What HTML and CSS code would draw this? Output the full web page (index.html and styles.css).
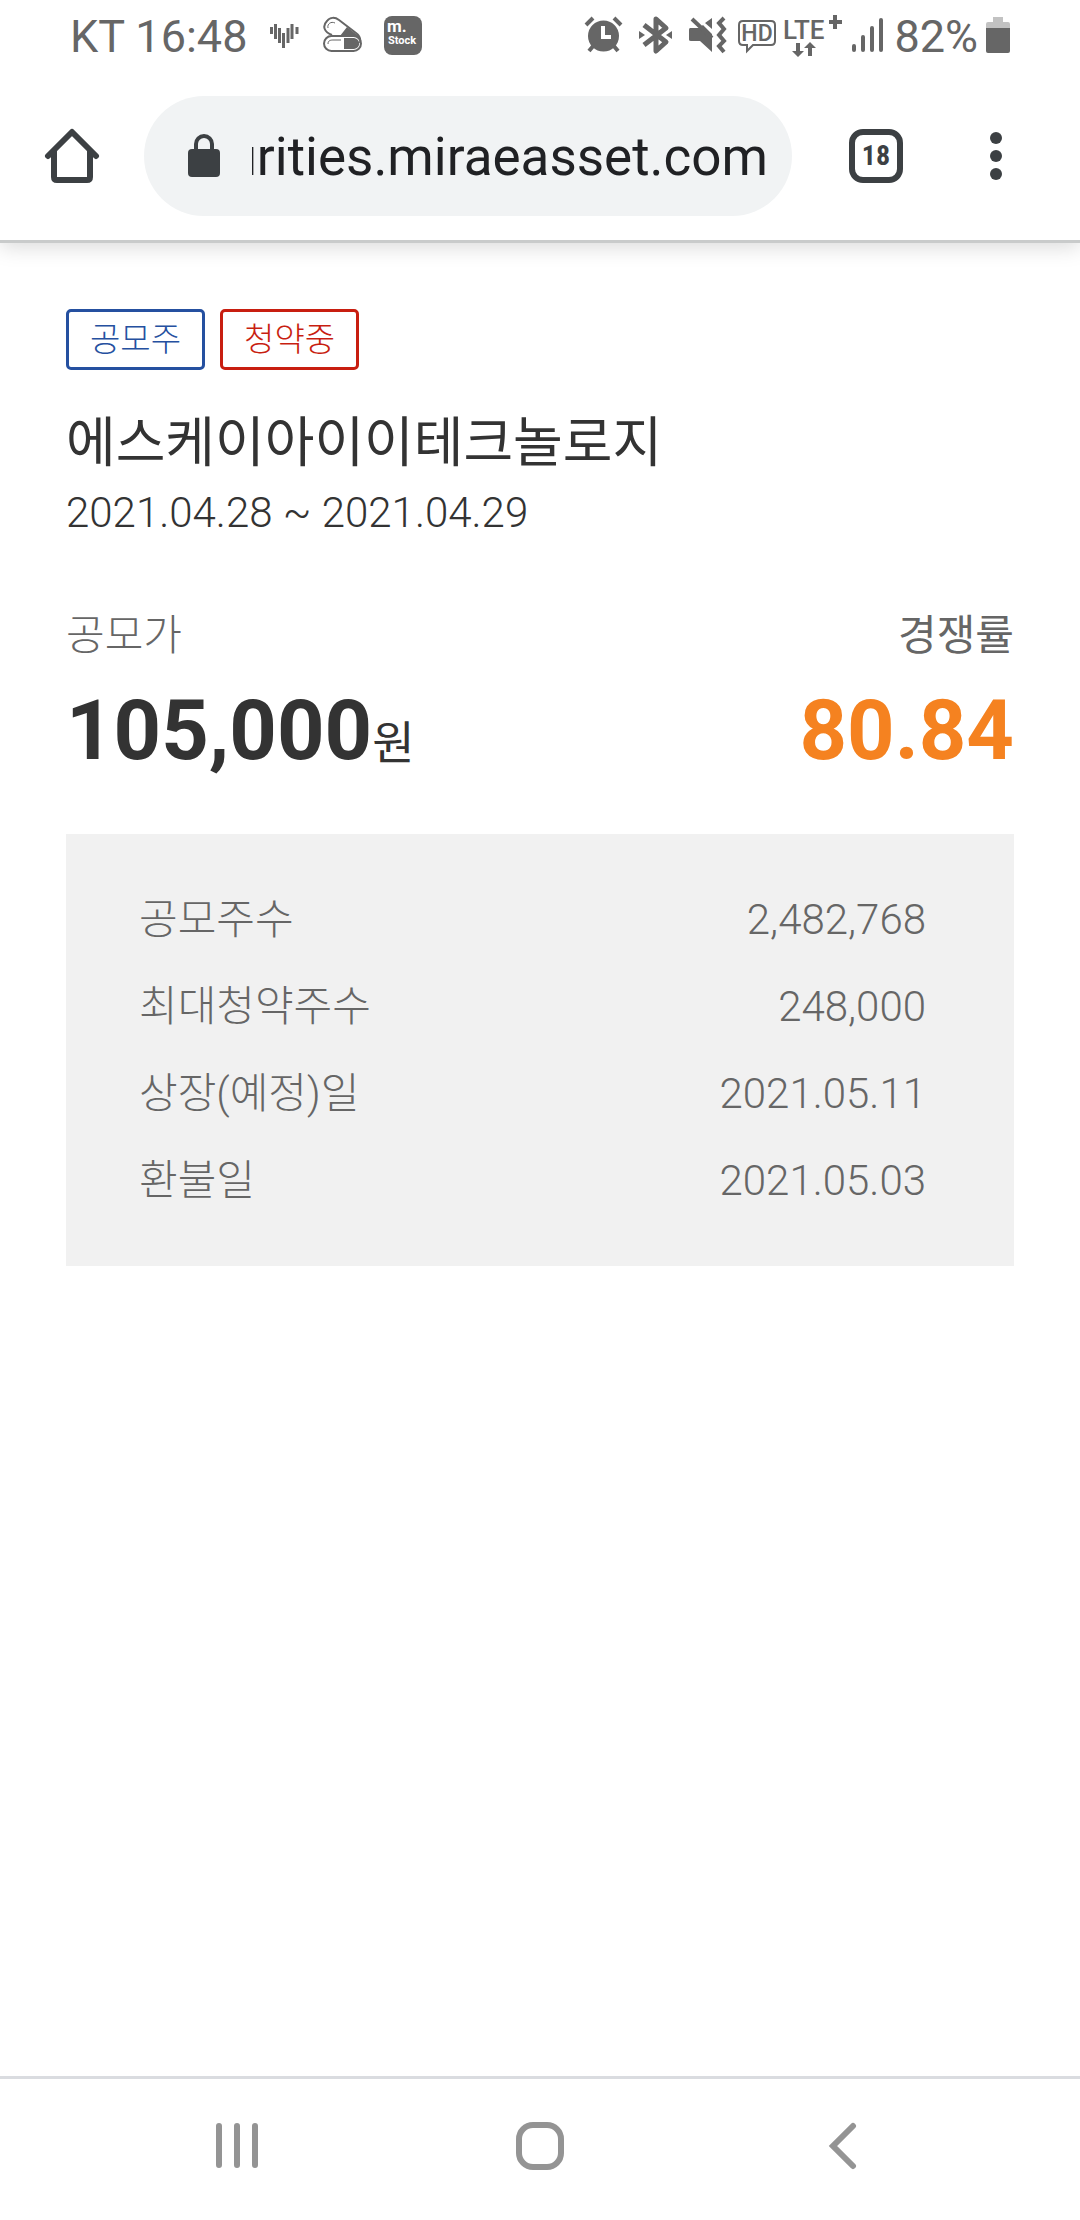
FILE: index.html
```html
<!DOCTYPE html>
<html lang="ko">
<head>
  <meta charset="UTF-8">
  <meta name="viewport" content="width=device-width, initial-scale=1">
  <title>공모주 청약</title>
  <link rel="stylesheet" href="styles.css">
</head>
<body>
  <div class="status-bar">
    <div class="status-left">
      <span>KT 16:48</span>
      <svg width="32" height="40" viewBox="0 0 32 40">
        <path d="M2.5 11v7M6.500 8v15M10.500 12v15M14.500 17v15M19 12v15M23 8v15M28 11v7" stroke="#666" stroke-width="3"/>
      </svg>
      <svg width="39" height="40" viewBox="0 0 39 40">
        <g fill="none" stroke="#666" stroke-width="2">
          <path d="M9 19C1 16-1 10 4 5c3-4 8-4 12-1l17 13c4 3 5 6 4 10"/>
          <rect x="1" y="20" width="37" height="15" rx="7.500"/>
          <path d="M5 12c-1-4 3-7 7-5M5 28c0-4 3-4 6-4h7" stroke-width="1"/>
        </g>
        <path d="M24 11l9 7c2 1 3 2 4 5-2-2-4-3-6-3H17zM21 22h10c7 1 7 10 0 11H21z" fill="#666"/>
      </svg>
      <svg width="38" height="40" viewBox="0 0 38 40">
        <rect y="0" width="38" height="39" rx="8" fill="#666"/>
        <text x="3" y="16" class="app-name app-name-big">m.</text>
        <text x="4" y="28" class="app-name">Stock</text>
      </svg>
    </div>
    <div class="status-right">
      <svg width="47" height="40" viewBox="0 0 47 40">
        <path d="M2 9l7-7M37 9l-7-7M5 35l5-6M34 35l-5-6" stroke="#666" stroke-width="4"/>
        <circle cx="19.500" cy="20" r="15.500" fill="#666"/>
        <path d="M19 10v11h8" fill="none" stroke="#fff" stroke-width="4"/>
      </svg>
      <svg width="42" height="40" viewBox="0 0 42 40">
        <path d="M5 9l22 17-10 9V3l10 9L5 29" fill="none" stroke="#666" stroke-width="5" stroke-linejoin="round"/>
        <path d="M0 15l6 4-6 4zM33 15l-6 4 6 4z" fill="#666"/>
      </svg>
      <svg width="41" height="40" viewBox="0 0 41 40">
        <path d="M2 12h8l4-3 9 9v18L11 25H2c-2 0-2-1-2-2v-9c0-2 1-2 2-2zM23 2v11l-7-6z" fill="#666"/>
        <path d="M3 3l20 19" stroke="#666" stroke-width="4"/>
        <path d="M35 2l-5 5 5 6-5 6 5 6-5 5 5 6" fill="none" stroke="#666" stroke-width="4"/>
      </svg>
      <svg width="38" height="40" viewBox="0 0 38 40">
        <path d="M5 5h28q4 0 4 4v16q0 4-4 4H15l-6 6v-6H5q-4 0-4-4V9q0-4 4-4z" fill="none" stroke="#666" stroke-width="2"/>
        <text x="19" y="25" text-anchor="middle" class="hd-text">HD</text>
      </svg>
      <svg width="60" height="44" viewBox="0 0 60 44">
        <text x="-1" y="25" class="lte-text">LTE</text>
        <path d="M45 8h13M51 1v14M14 29v9M26 42v-9" stroke="#666" stroke-width="4"/>
        <path d="M8 37h12l-6 6zM20 34h12l-6-6z" fill="#666"/>
      </svg>
      <svg width="34" height="40" viewBox="0 0 34 40">
        <path d="M2 30v4M11 21v13M20 12v22M29 4v30" stroke="#666" stroke-width="4" stroke-linecap="round"/>
      </svg>
      <span>82%</span>
      <svg width="24" height="40" viewBox="0 0 24 40">
        <path d="M7 1h10v5h5q2 0 2 2v4H0V8q0-2 2-2h5z" fill="#c2c2c2"/>
        <path d="M0 12h24v23q0 2-2 2H2q-2 0-2-2z" fill="#666"/>
      </svg>
    </div>
  </div>

  <header class="toolbar">
    <button type="button" class="home-button" aria-label="홈">
      <svg width="56" height="56" viewBox="0 0 56 56" fill="none" stroke="#3c4043" stroke-width="6">
        <path d="M4 28L28 4l24 24" stroke-linecap="round" stroke-linejoin="round"/>
        <path d="M10 22v27q0 3 3 3h30q3 0 3-3V22"/>
      </svg>
    </button>
    <div class="address">
      <svg width="32" height="44" viewBox="0 0 32 44">
        <rect y="15" width="32" height="28" rx="4" fill="#3c4043"/>
        <path d="M8 16v-6a8 8 0 0 1 16 0v6" fill="none" stroke="#3c4043" stroke-width="4"/>
      </svg>
      <input type="text" id="url" class="url" dir="rtl" aria-label="주소" value="securities.miraeasset.com">
    </div>
    <button type="button" class="tabs-button" aria-label="탭"><span class="tab-count">18</span></button>
    <button type="button" class="menu-button" aria-label="메뉴">
      <svg width="12" height="48" viewBox="0 0 12 48" fill="#3c4043">
        <circle cx="6" cy="6" r="6"/>
        <circle cx="6" cy="24" r="6"/>
        <circle cx="6" cy="42" r="6"/>
      </svg>
    </button>
  </header>

  <main class="content">
    <div class="badges">
      <span class="badge badge-blue">공모주</span>
      <span class="badge badge-red">청약중</span>
    </div>
    <h1 class="title">에스케이아이이테크놀로지</h1>
    <p class="period">2021.04.28 ~ 2021.04.29</p>

    <div class="summary">
      <div class="price">
        <div class="label">공모가</div>
        <div class="amount">105,000<span class="unit">원</span></div>
      </div>
      <div class="rate">
        <div class="label label-strong">경쟁률</div>
        <div class="amount amount-rate">80.84</div>
      </div>
    </div>

    <div class="info">
      <table class="info-table">
        <tr><th scope="row">공모주수</th><td>2,482,768</td></tr>
        <tr><th scope="row">최대청약주수</th><td>248,000</td></tr>
        <tr><th scope="row">상장(예정)일</th><td>2021.05.11</td></tr>
        <tr><th scope="row">환불일</th><td>2021.05.03</td></tr>
      </table>
    </div>
  </main>

  <nav class="nav-bar">
    <button type="button" aria-label="최근 앱">
      <svg width="48" height="48" viewBox="0 0 48 48" stroke="#949494" stroke-width="6" stroke-linecap="round">
        <path d="M6 4v39M24 4v39M42 4v39"/>
      </svg>
    </button>
    <button type="button" aria-label="홈 화면">
      <svg width="48" height="48" viewBox="0 0 48 48" fill="none" stroke="#949494" stroke-width="6">
        <rect x="3" y="3" width="42" height="42" rx="14"/>
      </svg>
    </button>
    <button type="button" aria-label="뒤로">
      <svg width="48" height="48" viewBox="0 0 48 48" fill="none" stroke="#949494" stroke-width="6" stroke-linecap="round">
        <path d="M34 4L14 24l20 20"/>
      </svg>
    </button>
  </nav>
</body>
</html>
```
FILE: styles.css
```css
* {
  box-sizing: border-box;
}

body {
  margin: 0;
  min-height: 100vh;
  display: flex;
  flex-direction: column;
  background-color: #fff;
  color: #333;
  font-family: Roboto, "Noto Sans CJK KR", sans-serif;
}

button {
  padding: 0;
  border: none;
  background: none;
  display: flex;
  align-items: center;
  justify-content: center;
}

svg {
  display: block;
  flex-shrink: 0;
}

/* Status bar */
.status-bar {
  display: flex;
  justify-content: space-between;
  height: 72px;
  padding: 0 70px;
  color: #666;
  font-size: 45px;
}

.status-left,
.status-right {
  display: flex;
  align-items: center;
  gap: 22px;
}

.status-right {
  gap: 8px;
}

.app-name {
  font-size: 11px;
  font-weight: 700;
  fill: #fff;
}

.app-name-big {
  font-size: 17px;
}

.hd-text {
  font-size: 23px;
  font-weight: 500;
  fill: #666;
}

.lte-text {
  font-size: 26px;
  font-weight: 500;
  fill: #666;
}

/* Toolbar */
.toolbar {
  display: flex;
  align-items: center;
  height: 171px;
  padding-right: 48px;
  border-bottom: 3px solid #c9cbcb;
  box-shadow: 0 4px 20px rgba(0, 0, 0, 0.15);
  clip-path: inset(0 0 -30px 0);
}

.home-button {
  width: 144px;
  height: 120px;
}

.address {
  flex: 1;
  min-width: 0;
  display: flex;
  align-items: center;
  gap: 32px;
  height: 120px;
  padding: 0 24px 0 44px;
  border-radius: 60px;
  background-color: #f1f3f4;
}

.url {
  flex: 1;
  min-width: 0;
  padding: 2px 0 0;
  border: none;
  outline: none;
  background: none;
  color: #202124;
  font-family: Roboto, sans-serif;
  font-size: 53px;
}

.tabs-button {
  width: 168px;
  height: 120px;
}

.tab-count {
  width: 54px;
  height: 54px;
  border: 6px solid #3c4043;
  border-radius: 14px;
  color: #3c4043;
  font-family: "Roboto Condensed", Roboto, sans-serif;
  font-size: 28px;
  font-weight: 700;
  line-height: 42px;
  text-align: center;
}

.menu-button {
  width: 72px;
  height: 120px;
}

/* Content */
.content {
  flex: 1;
  padding: 66px;
}

.badges {
  display: flex;
  gap: 15px;
}

.badge {
  padding: 0 21px;
  border: 3px solid;
  border-radius: 5px;
  font-size: 33px;
  font-weight: 300;
  line-height: 55px;
}

.badge-blue {
  color: #2550a0;
}

.badge-red {
  color: #c81e10;
}

.title {
  margin: 38px 0 0;
  font-size: 54px;
  font-weight: 400;
  line-height: 72px;
}

.period {
  margin: 7px 0 0;
  font-size: 42px;
  font-weight: 300;
  line-height: 52px;
}

.summary {
  display: flex;
  justify-content: space-between;
  margin-top: 67px;
}

.rate {
  text-align: right;
}

.label {
  color: #666;
  font-size: 42px;
  font-weight: 300;
  line-height: 60px;
}

.label-strong {
  font-weight: 400;
}

.amount {
  margin-top: 15px;
  font-size: 83px;
  font-weight: 700;
  line-height: 100px;
}

.amount-rate {
  color: #f58220;
}

.unit {
  font-size: 46px;
  font-weight: 400;
  line-height: 46px;
}

.info {
  margin-top: 53px;
  padding: 42px 88px 42px 73px;
  background-color: #f1f1f1;
}

.info-table {
  width: 100%;
  border-collapse: collapse;
  color: #666;
  font-size: 42px;
}

.info-table th,
.info-table td {
  height: 87px;
  padding: 0;
  font-weight: 300;
  line-height: 60px;
  text-align: left;
}

.info-table td {
  text-align: right;
}

/* Navigation bar */
.nav-bar {
  display: flex;
  height: 144px;
  padding: 0 86px 8px;
  border-top: 3px solid #dadce0;
}

.nav-bar button {
  flex: 1;
}
```
